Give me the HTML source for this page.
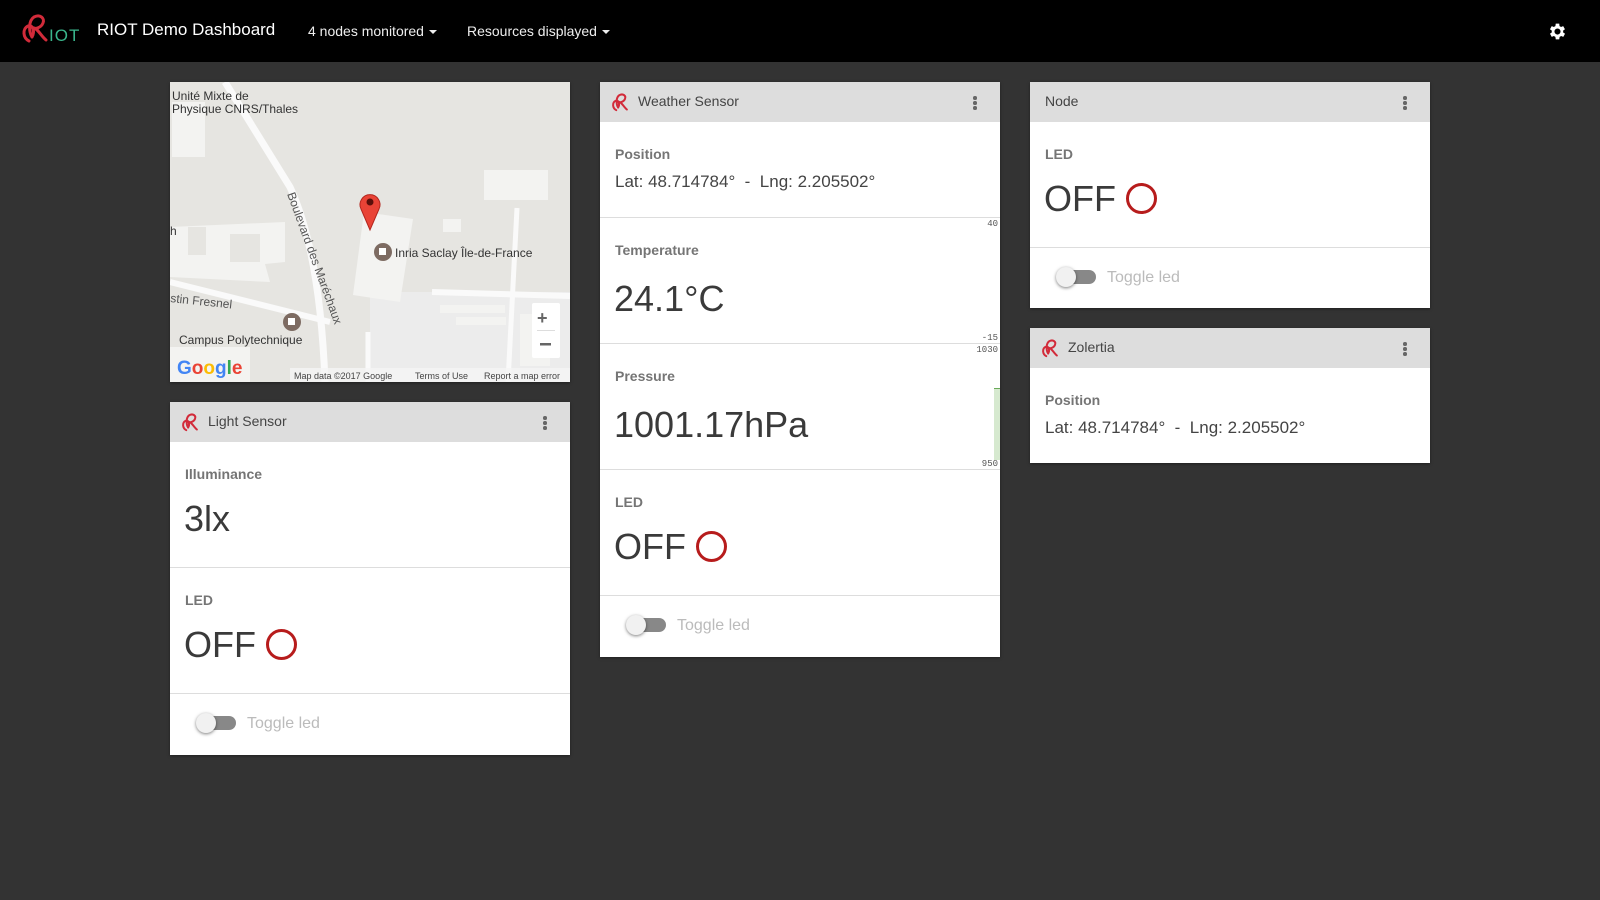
<!DOCTYPE html>
<html><head><meta charset="utf-8">
<style>
*{box-sizing:border-box;margin:0;padding:0}
body{width:1600px;height:900px;background:#333;font-family:"Liberation Sans",sans-serif;position:relative;overflow:hidden}
.nav{position:absolute;left:0;top:0;width:1600px;height:62px;background:#000;color:#fff}
.nav .t{position:absolute;top:20px;font-size:17px;color:#fff}
.nav .d{position:absolute;top:23px;font-size:14px;color:#eee}
.caret{display:inline-block;width:0;height:0;border-left:4px solid transparent;border-right:4px solid transparent;border-top:4px solid #eee;vertical-align:middle;margin-left:5px}
.card{position:absolute;width:400px;background:#fff;box-shadow:0 1px 3px rgba(0,0,0,.4)}
.hd{height:40px;background:#ddd;position:relative;font-size:14px;color:#444}
.hd span{position:absolute;top:11px}
.hd .logo{position:absolute;left:10px;top:10px}
.dots{position:absolute;right:23px;top:14px;width:4px}
.dots i{display:block;width:3.5px;height:3.5px;border-radius:50%;background:#666;margin-bottom:1.5px}
.sec{position:relative;border-bottom:1px solid #ddd}
.lbl{position:absolute;left:15px;font-size:14px;font-weight:bold;color:#757575}
.val{position:absolute;left:14px;font-size:36px;color:#3a3a3a;white-space:nowrap}
.pos{position:absolute;left:15px;font-size:17px;color:#444;white-space:nowrap}
.circ{display:inline-block;width:31px;height:31px;border:3px solid #b71c1c;border-radius:50%;vertical-align:middle;margin-left:10px;position:relative;top:-3px}
.tog{position:absolute;left:29px;top:22px;width:37px;height:14px;border-radius:7px;background:#888}
.tog:after{content:"";position:absolute;left:-3px;top:-3.5px;width:20px;height:20px;border-radius:50%;background:#f1f1f1;box-shadow:0 1px 3px rgba(0,0,0,.5)}
.tl{position:absolute;left:77px;top:21px;font-size:16px;color:#bbb}
.ax{position:absolute;right:2px;font-family:"Liberation Mono",monospace;font-size:9px;color:#555}
</style></head><body>
<div class="nav">
<svg style="position:absolute;left:20px;top:12px" width="60" height="32" viewBox="0 0 60 32">
<path d="M9 29 C3 26 2 17 8 14 C13 12 15 20 12 25 M12 25 C9 20 8 9 14 5 C20 2 25 6 23 11 C21 16 15 17 14 16 C18 17 21 24 26 28" fill="none" stroke="#d22b3a" stroke-width="3" stroke-linecap="round"/>
<text x="29" y="29" font-family="Liberation Sans" font-size="17" fill="#3ab68c" letter-spacing="1">IOT</text>
</svg>
<div class="t" style="left:97px">RIOT Demo Dashboard</div>
<div class="d" style="left:308px">4 nodes monitored<span class="caret"></span></div>
<div class="d" style="left:467px">Resources displayed<span class="caret"></span></div>
<svg style="position:absolute;left:1547px;top:21px" width="21" height="21" viewBox="0 0 24 24"><path fill="#fff" d="M19.4 13a7.5 7.5 0 0 0 0-2l2.1-1.6-2-3.5-2.5 1a7 7 0 0 0-1.7-1L15 3h-4l-.4 2.9a7 7 0 0 0-1.7 1l-2.5-1-2 3.5L6.5 11a7.5 7.5 0 0 0 0 2l-2.1 1.6 2 3.5 2.5-1a7 7 0 0 0 1.7 1L11 21h4l.4-2.9a7 7 0 0 0 1.7-1l2.5 1 2-3.5zM13 15.5a3.5 3.5 0 1 1 0-7 3.5 3.5 0 0 1 0 7z" transform="translate(-1 0)"/></svg>
</div>

<!-- map -->
<div class="card" style="left:170px;top:82px;height:300px;background:#e5e3df;overflow:hidden">
<svg width="400" height="300" viewBox="0 0 400 300" font-family="Liberation Sans">
<rect width="400" height="300" fill="#e6e5e1"/>
<rect x="200" y="210" width="200" height="90" fill="#ececec"/>
<g fill="#f3f3f1">
<rect x="2" y="20" width="33" height="55"/>
<rect x="314" y="88" width="64" height="30"/>
<polygon points="194,130 243,137 230,220 183,213"/>
<rect x="273" y="137" width="18" height="13"/>
<polygon points="0,145 115,140 115,180 95,182 100,200 0,195"/>
<rect x="270" y="223" width="65" height="8"/>
<rect x="286" y="235" width="50" height="8"/>
<rect x="350" y="232" width="30" height="52"/>
<rect x="0" y="265" width="80" height="35"/>
</g>
<g fill="#e6e5e1"><rect x="18" y="145" width="18" height="28"/><rect x="60" y="152" width="30" height="28"/></g>
<path d="M55 0 L120 105 Q150 170 155 300" stroke="#fafafa" stroke-width="7" fill="none"/>
<path d="M0 200 L160 240" stroke="#fafafa" stroke-width="6" fill="none"/>
<path d="M262 210 L400 214" stroke="#fafafa" stroke-width="6" fill="none"/>
<path d="M347 126 L338 300" stroke="#fafafa" stroke-width="5" fill="none"/>
<path d="M198 250 L198 300" stroke="#fafafa" stroke-width="5" fill="none"/>
<text x="2" y="18" font-size="12" fill="#333">Unité Mixte de</text>
<text x="2" y="31" font-size="12" fill="#333">Physique CNRS/Thales</text>
<text x="0" y="153" font-size="12" fill="#333">h</text>
<text transform="translate(117 112) rotate(70)" font-size="12" fill="#555">Boulevard des Maréchaux</text>
<text transform="translate(0 220) rotate(6)" font-size="12" fill="#555">stin Fresnel</text>
<text x="9" y="262" font-size="12" fill="#333">Campus Polytechnique</text>
<circle cx="122" cy="240" r="9" fill="#7d6b62"/><rect x="118" y="236" width="7" height="7" fill="#fff"/>
<circle cx="213" cy="170" r="9" fill="#7d6b62"/><rect x="209" y="166" width="7" height="7" fill="#fff"/>
<text x="225" y="175" font-size="12" fill="#333">Inria Saclay Île-de-France</text>
<path d="M200 148 L191 127 A10 10 0 1 1 209 127 Z" fill="#e94336" stroke="#b3261e" stroke-width="1"/>
<circle cx="200" cy="120" r="3.5" fill="#5a0f0a"/>
<rect x="362" y="221" width="28" height="55" rx="2" fill="#fff"/>
<text x="367" y="242" font-size="18" fill="#666" font-weight="bold">+</text>
<rect x="367" y="248" width="18" height="1" fill="#ddd"/>
<rect x="370" y="261" width="11" height="2.5" fill="#666"/>
<text x="7" y="292" font-size="19" font-weight="bold"><tspan fill="#4285f4">G</tspan><tspan fill="#ea4335">o</tspan><tspan fill="#fbbc05">o</tspan><tspan fill="#4285f4">g</tspan><tspan fill="#34a853">l</tspan><tspan fill="#ea4335">e</tspan></text>
<rect x="120" y="286" width="280" height="14" fill="#f5f5f5" opacity=".8"/>
<text x="124" y="297" font-size="9" fill="#444">Map data ©2017 Google</text>
<text x="245" y="297" font-size="9" fill="#444">Terms of Use</text>
<text x="314" y="297" font-size="9" fill="#444">Report a map error</text>
</svg>
</div>

<!-- light sensor -->
<div class="card" style="left:170px;top:402px;height:353px">
<div class="hd"><svg class="logo" width="20" height="20" viewBox="0 0 30 32"><path d="M9 29 C3 26 2 17 8 14 C13 12 15 20 12 25 M12 25 C9 20 8 9 14 5 C20 2 25 6 23 11 C21 16 15 17 14 16 C18 17 21 24 26 28" fill="none" stroke="#d22b3a" stroke-width="3.2" stroke-linecap="round"/></svg><span style="left:38px">Light Sensor</span><div class="dots"><i></i><i></i><i></i></div></div>
<div class="sec" style="height:126px"><div class="lbl" style="top:24px">Illuminance</div><div class="val" style="top:56px">3lx</div></div>
<div class="sec" style="height:126px"><div class="lbl" style="top:24px">LED</div><div class="val" style="top:56px">OFF<span class="circ"></span></div></div>
<div style="position:relative;height:61px"><div class="tog"></div><div class="tl">Toggle led</div></div>
</div>

<!-- weather -->
<div class="card" style="left:600px;top:82px;height:575px">
<div class="hd"><svg class="logo" width="20" height="20" viewBox="0 0 30 32"><path d="M9 29 C3 26 2 17 8 14 C13 12 15 20 12 25 M12 25 C9 20 8 9 14 5 C20 2 25 6 23 11 C21 16 15 17 14 16 C18 17 21 24 26 28" fill="none" stroke="#d22b3a" stroke-width="3.2" stroke-linecap="round"/></svg><span style="left:38px">Weather Sensor</span><div class="dots"><i></i><i></i><i></i></div></div>
<div class="sec" style="height:96px"><div class="lbl" style="top:24px">Position</div><div class="pos" style="top:50px">Lat: 48.714784° &nbsp;-&nbsp; Lng: 2.205502°</div></div>
<div class="sec" style="height:126px"><div class="ax" style="top:1px">40</div><div class="ax" style="bottom:0">-15</div><div class="lbl" style="top:24px">Temperature</div><div class="val" style="top:60px">24.1°C</div></div>
<div class="sec" style="height:126px"><div class="ax" style="top:1px">1030</div><div class="ax" style="bottom:0">950</div><div style="position:absolute;right:0;top:44px;width:6px;height:72px;background:#d6e9cf;border-top:1px solid #6aaa5a"></div><div class="lbl" style="top:24px">Pressure</div><div class="val" style="top:60px">1001.17hPa</div></div>
<div class="sec" style="height:126px"><div class="lbl" style="top:24px">LED</div><div class="val" style="top:56px">OFF<span class="circ"></span></div></div>
<div style="position:relative;height:61px"><div class="tog"></div><div class="tl">Toggle led</div></div>
</div>

<!-- node -->
<div class="card" style="left:1030px;top:82px;height:226px">
<div class="hd"><span style="left:15px">Node</span><div class="dots"><i></i><i></i><i></i></div></div>
<div class="sec" style="height:126px"><div class="lbl" style="top:24px">LED</div><div class="val" style="top:56px">OFF<span class="circ"></span></div></div>
<div style="position:relative;height:60px"><div class="tog"></div><div class="tl">Toggle led</div></div>
</div>

<!-- zolertia -->
<div class="card" style="left:1030px;top:328px;height:135px">
<div class="hd"><svg class="logo" width="20" height="20" viewBox="0 0 30 32"><path d="M9 29 C3 26 2 17 8 14 C13 12 15 20 12 25 M12 25 C9 20 8 9 14 5 C20 2 25 6 23 11 C21 16 15 17 14 16 C18 17 21 24 26 28" fill="none" stroke="#d22b3a" stroke-width="3.2" stroke-linecap="round"/></svg><span style="left:38px">Zolertia</span><div class="dots"><i></i><i></i><i></i></div></div>
<div style="position:relative;height:95px"><div class="lbl" style="top:24px">Position</div><div class="pos" style="top:50px">Lat: 48.714784° &nbsp;-&nbsp; Lng: 2.205502°</div></div>
</div>
</body></html>
